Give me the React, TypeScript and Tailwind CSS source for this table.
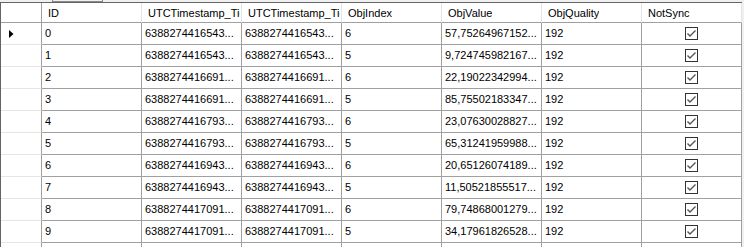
import React from "react";

const rows: [string, string, string, string, string, string][] = [
  ["0", "6388274416543...", "6388274416543...", "6", "57,75264967152...", "192"],
  ["1", "6388274416543...", "6388274416543...", "5", "9,724745982167...", "192"],
  ["2", "6388274416691...", "6388274416691...", "6", "22,19022342994...", "192"],
  ["3", "6388274416691...", "6388274416691...", "5", "85,75502183347...", "192"],
  ["4", "6388274416793...", "6388274416793...", "6", "23,07630028827...", "192"],
  ["5", "6388274416793...", "6388274416793...", "5", "65,31241959988...", "192"],
  ["6", "6388274416943...", "6388274416943...", "6", "20,65126074189...", "192"],
  ["7", "6388274416943...", "6388274416943...", "5", "11,50521855517...", "192"],
  ["8", "6388274417091...", "6388274417091...", "6", "79,74868001279...", "192"],
  ["9", "6388274417091...", "6388274417091...", "5", "34,17961826528...", "192"],
];

const headers = ["ID", "UTCTimestamp_Tic", "UTCTimestamp_Tic", "ObjIndex", "ObjValue", "ObjQuality", "NotSync"];

function CheckBox() {
  return (
    <svg width="13" height="13" viewBox="0 0 13 13">
      <rect x="0.5" y="0.5" width="12" height="12" fill="white" stroke="#333333" strokeWidth="1" />
      <polyline points="2.5,6.5 5,9 10.5,3.5" fill="none" stroke="#555555" strokeWidth="1.4" />
    </svg>
  );
}

function Arrow() {
  return (
    <svg width="5" height="8" viewBox="0 0 5 8">
      <polygon points="0,0 4.5,4 0,8" fill="#000000" />
    </svg>
  );
}

const dataCell =
  "h-[22px] border-r border-b border-[#a0a0a0] bg-white pl-[3px] flex items-center overflow-hidden whitespace-nowrap";

export default function App() {
  return (
    <div
      className="w-[744px] h-[247px] overflow-hidden bg-[#f0f0f0] text-[11px] text-black leading-none"
      style={{ fontFamily: '"Liberation Sans", Arial, sans-serif' }}
    >
      <div className="h-[2px]">
        <div className="ml-[52px] w-[51px] h-[2px] border-x border-b border-[#8a8a8a] bg-[#f0f0f0]" />
      </div>
      <div className="border-t border-l border-[#646464] w-fit bg-white">
        <div className="grid grid-cols-[41px_repeat(7,100px)]">
          {/* header */}
          <div className="h-[20px] border-r border-b border-[#a0a0a0] bg-white" />
          {headers.map((h, i) => (
            <div
              key={i}
              className="h-[20px] border-r border-b border-r-[#e5e5e5] border-b-[#a0a0a0] bg-white pl-[6px] pt-[2px] flex items-center overflow-hidden whitespace-nowrap"
            >
              <span className="block overflow-hidden whitespace-nowrap max-w-[92px]">{h}</span>
            </div>
          ))}
          {rows.map((r, ri) => (
            <React.Fragment key={ri}>
              <div className="h-[22px] border-r border-b border-r-[#a0a0a0] border-b-[#e5e5e5] bg-white pl-[8px] flex items-center">
                {ri === 0 ? <Arrow /> : null}
              </div>
              {r.map((v, ci) => (
                <div key={ci} className={dataCell}>
                  {v}
                </div>
              ))}
              <div className="h-[22px] border-r border-b border-[#a0a0a0] bg-white flex items-center justify-center pr-[1px]">
                <CheckBox />
              </div>
            </React.Fragment>
          ))}
          {/* new row, partially visible */}
          <div className="h-[22px] border-r border-b border-r-[#a0a0a0] border-b-[#e5e5e5] bg-white" />
          {headers.map((_, i) => (
            <div key={i} className="h-[22px] border-r border-b border-[#a0a0a0] bg-white" />
          ))}
        </div>
      </div>
    </div>
  );
}
